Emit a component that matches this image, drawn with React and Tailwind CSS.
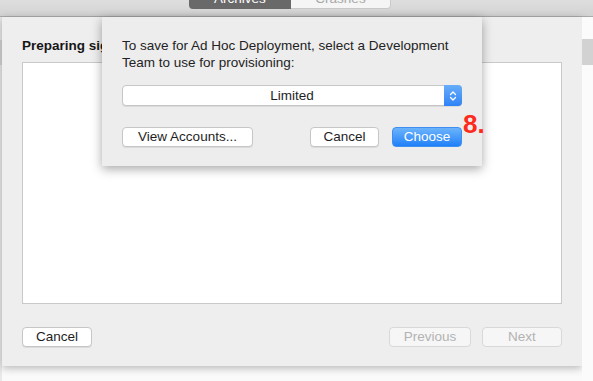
import React from "react";

function Btn({ children, className = "" }) {
  return (
    <div
      className={
        "h-[20px] flex items-center justify-center rounded-[4px] bg-white border border-[#c6c6c6] shadow-[0_1px_0_rgba(0,0,0,0.08)] text-[13.5px] leading-[16px] text-[#1e1e1e] " +
        className
      }
    >
      {children}
    </div>
  );
}

function DisabledBtn({ children, className = "" }) {
  return (
    <div
      className={
        "h-[20px] flex items-center justify-center rounded-[4px] bg-[#f6f6f6] border border-[#d8d8d8] text-[13.5px] leading-[16px] text-[#b3b3b3] " +
        className
      }
    >
      {children}
    </div>
  );
}

export default function App() {
  return (
    <div className="relative w-[593px] h-[381px] overflow-hidden bg-[#fafafa] font-['Liberation_Sans',Arial,sans-serif]">
      {/* toolbar */}
      <div className="h-[17px] bg-gradient-to-b from-[#dedede] to-[#d3d3d3] border-b border-[#ababab] flex">
        <div className="ml-[189px] flex h-[20px] -mt-[11px]">
          <div className="w-[102px] h-full bg-[#696969] rounded-bl-[4px] flex justify-center text-white text-[13.5px] leading-[16px] pt-[2px]">
            Archives
          </div>
          <div className="w-[100px] h-full bg-[#f5f5f5] border border-[#c9c9c9] border-l-0 rounded-br-[4px] flex justify-center text-[#a8a8a8] text-[13.5px] leading-[16px] pt-[1px]">
            Crashes
          </div>
        </div>
      </div>

      {/* body */}
      <div className="flex h-[364px]">
        {/* left strip */}
        <div className="w-[2px] flex flex-col bg-[#e9e9e9]">
          <div className="h-[23px]" />
          <div className="h-[25px] bg-[#d4d4d4]" />
        </div>

        {/* main sheet */}
        <div className="w-[580px] h-[349px] bg-[#eeeeee] shadow-[0_2px_8px_rgba(0,0,0,0.28)] flex flex-col px-[20px] pt-[21px] pb-[19px]">
          <div className="text-[13.5px] leading-[16px] font-bold text-[#161616]">
            Preparing signed application
          </div>
          <div className="mt-[8px] h-[243px] bg-white border border-[#c9c9c9]" />
          <div className="mt-[23px] flex">
            <Btn className="w-[70px]">Cancel</Btn>
            <div className="flex-1" />
            <DisabledBtn className="w-[82px]">Previous</DisabledBtn>
            <DisabledBtn className="w-[80px] ml-[11px]">Next</DisabledBtn>
          </div>
        </div>

        {/* right strip */}
        <div className="flex-1 flex flex-col bg-[#fbfbfb]">
          <div className="h-[22px]" />
          <div className="h-[26px] bg-[#d2d2d2]" />
        </div>
      </div>

      {/* dialog sheet over content */}
      <div className="absolute left-[102px] top-[17px] w-[380px] h-[149px] bg-[#ededed] shadow-[0_3px_10px_rgba(0,0,0,0.35)] px-[20px] pt-[20px] flex flex-col">
        <div className="text-[13.5px] leading-[17px] text-[#232323]">
          To save for Ad Hoc Deployment, select a Development
          <br />
          Team to use for provisioning:
        </div>
        <div className="mt-[14px] h-[21px] relative flex items-center justify-center rounded-[4px] bg-white border border-[#c6c6c6] shadow-[0_1px_0_rgba(0,0,0,0.08)]">
          <span className="text-[13.5px] leading-[16px] text-[#1e1e1e]">Limited</span>
          <div className="absolute right-[-1px] top-[-1px] w-[18px] h-[21px] rounded-r-[4px] bg-gradient-to-b from-[#68adf9] to-[#2f82f7] flex items-center justify-center">
            <svg width="8" height="12" viewBox="0 0 8 12" fill="none" stroke="white" strokeWidth="1.3" strokeLinecap="round" strokeLinejoin="round">
              <path d="M1.5 4.5 L4 2 L6.5 4.5" />
              <path d="M1.5 7.5 L4 10 L6.5 7.5" />
            </svg>
          </div>
        </div>
        <div className="mt-[21px] flex">
          <Btn className="w-[131px]">View Accounts...</Btn>
          <div className="flex-1" />
          <Btn className="w-[69px]">Cancel</Btn>
          <div className="ml-[13px] w-[70px] h-[20px] flex items-center justify-center rounded-[4px] bg-gradient-to-b from-[#6bb3fb] to-[#1d80f8] border border-[#3f8ff0] text-white text-[13.5px] leading-[16px]">
            Choose
          </div>
        </div>
      </div>

      {/* step label */}
      <div className="absolute left-[463px] top-[111px] text-[26px] leading-[26px] font-bold text-[#fc2b1c] font-['Liberation_Sans',Arial,sans-serif]">
        8.
      </div>
    </div>
  );
}
